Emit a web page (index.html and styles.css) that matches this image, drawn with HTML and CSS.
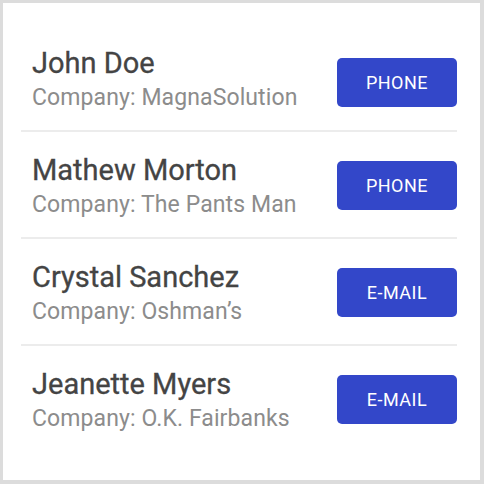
FILE: index.html
```html
<!DOCTYPE html>
<html>
<head>
<meta charset="utf-8">
<link rel="stylesheet" href="styles.css">
</head>
<body>
<div class="card">
  <div class="row first">
    <div class="info">
      <div class="name">John Doe</div>
      <div class="company">Company: MagnaSolution</div>
    </div>
    <button class="btn">PHONE</button>
  </div>
  <div class="row">
    <div class="info">
      <div class="name">Mathew Morton</div>
      <div class="company">Company: The Pants Man</div>
    </div>
    <button class="btn">PHONE</button>
  </div>
  <div class="row">
    <div class="info">
      <div class="name">Crystal Sanchez</div>
      <div class="company">Company: Oshman’s</div>
    </div>
    <button class="btn">E-MAIL</button>
  </div>
  <div class="row">
    <div class="info">
      <div class="name">Jeanette Myers</div>
      <div class="company">Company: O.K. Fairbanks</div>
    </div>
    <button class="btn">E-MAIL</button>
  </div>
</div>
</body>
</html>
```

FILE: styles.css
```css
html, body {
  margin: 0;
  padding: 0;
  background: #ffffff;
}

.card {
  width: 484px;
  height: 484px;
  box-sizing: border-box;
  border: 3px solid #dcdcdc;
  border-right-width: 4px;
  border-bottom-width: 4px;
  padding: 22px 23px 0 18px;
  font-family: Roboto, "Liberation Sans", sans-serif;
  background: #ffffff;
}

.row {
  display: flex;
  align-items: center;
  justify-content: space-between;
  padding: 21px 0 19px 11px;
  border-bottom: 2px solid #ececec;
}

.row:last-child {
  border-bottom: none;
}

.info {
  display: flex;
  flex-direction: column;
  gap: 4px;
}

.name {
  font-size: 29px;
  line-height: 34px;
  font-weight: 400;
  color: #444444;
  -webkit-text-stroke: 0.3px #444444;
}

.company {
  font-size: 23px;
  line-height: 27px;
  letter-spacing: 0.1px;
  color: #8c8c8c;
}

.btn {
  width: 120px;
  height: 49px;
  border: none;
  border-radius: 5px;
  background: #3347c9;
  color: #ffffff;
  font-family: Roboto, "Liberation Sans", sans-serif;
  font-size: 18px;
  letter-spacing: 0.5px;
  padding: 0;
}

.row.first .btn {
  margin-top: 8px;
}
```
